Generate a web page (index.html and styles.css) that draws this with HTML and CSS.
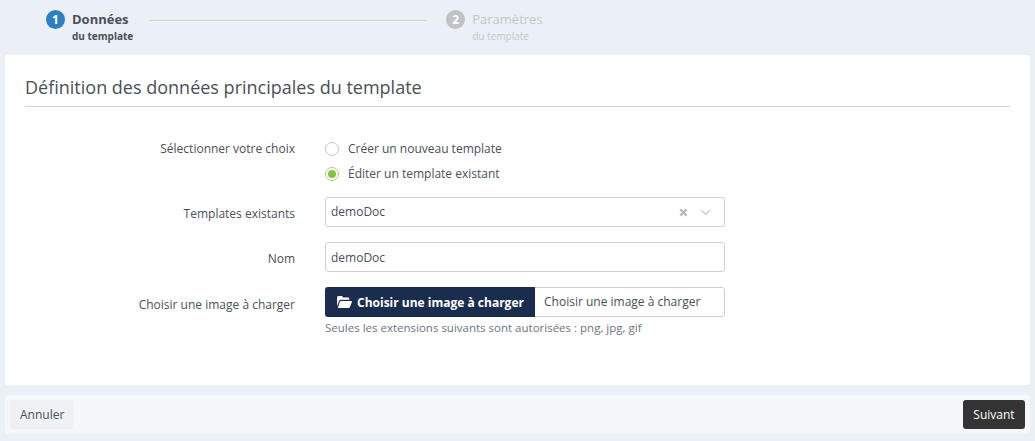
FILE: index.html
```html
<!DOCTYPE html>
<html lang="fr">
<head>
  <meta charset="UTF-8" />
  <title>Définition du template</title>
  <link rel="stylesheet" href="styles.css">
</head>
<body>

  <ol class="steps">
    <li class="step step--active">
      <span class="step__num">1</span>
      <span class="step__text">
        <span class="step__title">Données</span>
        <span class="step__sub">du template</span>
      </span>
    </li>
    <li class="steps__line"></li>
    <li class="step">
      <span class="step__num">2</span>
      <span class="step__text">
        <span class="step__title">Paramètres</span>
        <span class="step__sub">du template</span>
      </span>
    </li>
  </ol>

  <main class="card">
    <h1 class="card__title">Définition des données principales du template</h1>

    <form class="form">
      <div class="form__row form__row--radios">
        <span class="form__label">Sélectionner votre choix</span>
        <div class="radios">
          <label class="radio">
            <span class="radio__mark"></span>
            Créer un nouveau template
          </label>
          <label class="radio radio--on">
            <span class="radio__mark"></span>
            Éditer un template existant
          </label>
        </div>
      </div>

      <div class="form__row">
        <span class="form__label">Templates existants</span>
        <div class="field select">
          <span class="select__value">demoDoc</span>
          <svg class="select__clear" viewBox="0 0 10 10" fill="none" stroke="currentColor" stroke-width="2.6">
            <path d="M1.5 1.5L8.500 8.500M8.500 1.500L1.500 8.500"></path>
          </svg>
          <svg class="select__arrow" viewBox="0 0 12 8" fill="none" stroke="currentColor" stroke-width="1.4">
            <path d="M1 1.500L6 6L11 1.500"></path>
          </svg>
        </div>
      </div>

      <div class="form__row">
        <span class="form__label">Nom</span>
        <div class="field field--text">demoDoc</div>
      </div>

      <div class="form__row form__row--file">
        <span class="form__label">Choisir une image à charger</span>
        <div class="form__control">
          <div class="file">
            <span class="file__btn">
              <svg class="file__icon" viewBox="0 0 16 13" fill="currentColor">
                <path d="M0 11V1.500C0 .7.7 0 1.500 0h3.600l1.600 1.600h5c.8 0 1.500.7 1.500 1.500V4H4.200C3.300 4 2.600 4.400 2.200 5.200L0 11z"></path>
                <path d="M.8 13h11.700c.5 0 1-.3 1.300-.8L16 6.400c.2-.5-.1-1.100-.7-1.100H4.300c-.6 0-1.100.3-1.300.8L.8 13z"></path>
              </svg>
              Choisir une image à charger
            </span>
            <span class="file__name">Choisir une image à charger</span>
          </div>
          <p class="form__hint">Seules les extensions suivants sont autorisées : png, jpg, gif</p>
        </div>
      </div>
    </form>
  </main>

  <footer class="actions">
    <button class="btn btn--light" type="button">Annuler</button>
    <button class="btn btn--dark" type="button">Suivant</button>
  </footer>

</body>
</html>
```

FILE: styles.css
```css
:root {
  --page-bg: #ebeff6;
  --text: #495057;
  --border: #ced0d2;
  --navy: #1b2d4f;
}

* {
  box-sizing: border-box;
}

body {
  margin: 0;
  height: 441px;
  overflow: hidden;
  padding: 0 5px;
  background: var(--page-bg);
  font-family: "Open Sans", sans-serif;
  font-size: 12px;
  color: var(--text);
}

/* Wizard steps */
.steps {
  display: flex;
  align-items: flex-start;
  height: 55px;
  margin: 0;
  padding: 10px 0 0 41px;
  list-style: none;
}

.step {
  display: flex;
  gap: 7px;
  color: #c4c7cc;
}

.step--active {
  color: #495057;
}

.step__num {
  width: 19px;
  height: 19px;
  border-radius: 50%;
  background: #bfc2c6;
  color: #fff;
  font-size: 12px;
  font-weight: 700;
  line-height: 19px;
  text-align: center;
}

.step--active .step__num {
  background: #2f80c2;
}

.step__text {
  display: flex;
  flex-direction: column;
}

.step__title {
  font-size: 13px;
  line-height: 19px;
}

.step--active .step__title {
  font-weight: 700;
}

.step__sub {
  font-size: 10px;
  line-height: 15px;
}

.step--active .step__sub {
  font-weight: 700;
}

.steps__line {
  width: 278px;
  height: 1px;
  margin: 10px 19px 0 16px;
  background: #d3d6da;
}

/* Main card */
.card {
  height: 330px;
  padding: 19px 20px 20px;
  background: #fff;
  border-radius: 3px;
}

.card__title {
  margin: 0;
  padding-bottom: 6px;
  border-bottom: 1px solid var(--border);
  font-size: 18px;
  font-weight: 400;
  line-height: 26px;
}

.form {
  margin-top: 29px;
}

.form__row {
  display: flex;
  align-items: center;
  gap: 30px;
  margin-bottom: 15px;
}

.form__row--radios,
.form__row--file {
  align-items: flex-start;
}

.form__row--radios {
  margin-bottom: 11px;
}

.form__label {
  width: 270px;
  margin-top: 4px;
  text-align: right;
  line-height: 26px;
}

.form__row--radios .form__label {
  margin-top: 0;
}

.form__row--file .form__label {
  margin-top: 0;
  line-height: 36px;
}

.form__control {
  width: 400px;
}

.form__hint {
  margin: 3px 0 0;
  font-size: 11.5px;
  line-height: 16px;
  color: #6c757d;
}

/* Radios */
.radios {
  display: flex;
  flex-direction: column;
}

.radio {
  display: flex;
  align-items: center;
  gap: 9px;
  height: 25px;
}

.radio__mark {
  position: relative;
  width: 14px;
  height: 14px;
  border: 1px solid #c4c6c8;
  border-radius: 50%;
}

.radio--on .radio__mark {
  border-color: #a5d46e;
}

.radio--on .radio__mark::after {
  content: "";
  position: absolute;
  inset: 2px;
  border-radius: 50%;
  background: #85c441;
}

/* Inputs */
.field {
  width: 400px;
  height: 30px;
  padding: 0 5px;
  border: 1px solid var(--border);
  border-radius: 3px;
  line-height: 28px;
}

.field--text {
  line-height: 30px;
}

.select {
  display: flex;
  align-items: center;
}

.select__value {
  flex: 1;
}

.select__clear {
  width: 9px;
  height: 9px;
  margin-right: 12px;
  color: #b9bcbf;
}

.select__arrow {
  width: 11px;
  height: 7px;
  margin-right: 8px;
  color: #c2c4c7;
}

/* File upload */
.file {
  display: flex;
  height: 30px;
  border: 1px solid var(--border);
  border-radius: 3px;
}

.file__btn {
  display: flex;
  align-items: center;
  gap: 5px;
  width: 210px;
  margin: -1px 0 -1px -1px;
  padding-left: 12px;
  border-radius: 3px 0 0 3px;
  background: var(--navy);
  color: #fff;
  font-weight: 700;
}

.file__icon {
  width: 15px;
  height: 12px;
}

.file__name {
  padding-left: 9px;
  line-height: 28px;
}

/* Footer buttons */
.actions {
  display: flex;
  justify-content: space-between;
  align-items: center;
  height: 39px;
  margin-top: 10px;
  padding: 0 5px;
  background: #f5f7fb;
  border-radius: 3px;
}

.btn {
  height: 29px;
  padding: 0 10px;
  border: 0;
  border-radius: 3px;
  font-family: inherit;
  font-size: 12px;
}

.btn--light {
  background: #eff1f4;
  color: #495057;
}

.btn--dark {
  min-width: 62px;
  background: #343434;
  color: #fff;
}
```
